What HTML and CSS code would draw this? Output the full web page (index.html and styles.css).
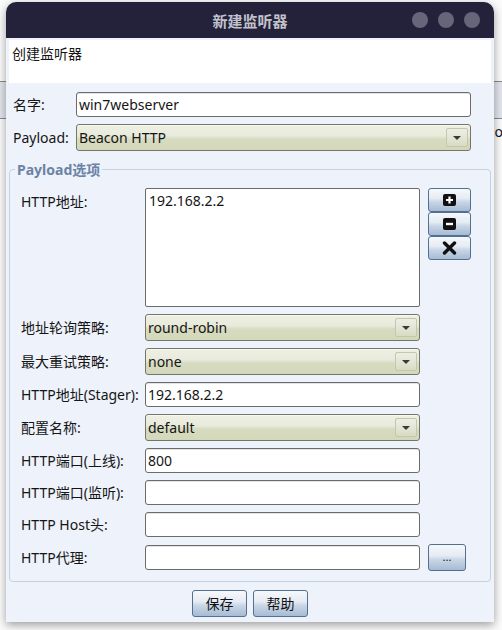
FILE: index.html
```html
<!DOCTYPE html>
<html>
<head>
<meta charset="utf-8">
<link rel="stylesheet" href="styles.css">
</head>
<body>
<div class="backdrop">
  <div class="band"></div>
  <div class="peek">o</div>
</div>
<div class="window">
  <div class="titlebar">
    <span></span>
    <span class="title">新建监听器</span>
    <div class="dots"><i></i><i></i><i></i></div>
  </div>
  <div class="body">
    <div class="header">创建监听器</div>
    <div class="top-form">
      <label>名字:</label>
      <div class="input">win7webserver</div>
      <label>Payload:</label>
      <div class="combo"><span>Beacon HTTP</span><b class="arrow"><i></i></b></div>
    </div>
    <fieldset class="group">
      <legend>Payload选项</legend>
      <div class="grid">
        <label class="top">HTTP地址:</label>
        <div class="textarea">192.168.2.2</div>
        <div class="stack">
          <button class="btn ibtn"><svg width="13" height="12" viewBox="0 0 13 12"><rect x="0" y="0" width="13" height="12" rx="2" fill="#111"/><path d="M6.5 2.5v7M3 6h7" stroke="#fff" stroke-width="2.2"/></svg></button>
          <button class="btn ibtn"><svg width="13" height="12" viewBox="0 0 13 12"><rect x="0" y="0" width="13" height="12" rx="2" fill="#111"/><path d="M3 6h7" stroke="#fff" stroke-width="2.4"/></svg></button>
          <button class="btn ibtn"><svg width="15" height="14" viewBox="0 0 15 14"><path d="M2.5 2l10 10M12.5 2l-10 10" stroke="#111" stroke-width="3.4" stroke-linecap="round"/></svg></button>
        </div>

        <label>地址轮询策略:</label>
        <div class="combo"><span>round-robin</span><b class="arrow"><i></i></b></div>
        <span></span>

        <label>最大重试策略:</label>
        <div class="combo"><span>none</span><b class="arrow"><i></i></b></div>
        <span></span>

        <label>HTTP地址(Stager):</label>
        <div class="input">192.168.2.2</div>
        <span></span>

        <label>配置名称:</label>
        <div class="combo"><span>default</span><b class="arrow"><i></i></b></div>
        <span></span>

        <label>HTTP端口(上线):</label>
        <div class="input">800</div>
        <span></span>

        <label>HTTP端口(监听):</label>
        <div class="input"></div>
        <span></span>

        <label>HTTP Host头:</label>
        <div class="input"></div>
        <span></span>

        <label>HTTP代理:</label>
        <div class="input"></div>
        <button class="btn dots-btn">...</button>
      </div>
    </fieldset>
    <div class="actions">
      <button class="btn action">保存</button>
      <button class="btn action">帮助</button>
    </div>
  </div>
</div>
</body>
</html>
```

FILE: styles.css
```css
* { box-sizing: border-box; }
html, body { margin: 0; padding: 0; }
body {
  width: 502px;
  height: 630px;
  overflow: hidden;
  background: #fbfbfc;
  font-family: "Noto Sans", "Noto Sans CJK SC", sans-serif;
  font-size: 14px;
  color: #151515;
  display: grid;
  align-items: start;
}
.backdrop, .window { grid-area: 1 / 1; }

.backdrop { padding-top: 81px; }
.backdrop .band {
  height: 38px;
  background: #e2e6ec;
  border-top: 1px solid #8a8a8a;
  border-bottom: 1px solid #7d8ea5;
}
.backdrop .peek {
  text-align: right;
  margin-right: -1px;
  line-height: 20px;
  padding-top: 3px;
}

.window {
  margin: 2px 0 0 6px;
  width: 488px;
  height: 620px;
  z-index: 1;
  box-shadow: 0 3px 10px rgba(0, 0, 0, 0.38);
  border-radius: 10px 10px 0 0;
}

.titlebar {
  height: 36px;
  background: #23223a;
  border-radius: 10px 10px 0 0;
  display: grid;
  grid-template-columns: 1fr auto 1fr;
  align-items: center;
  padding-right: 14px;
}
.title {
  color: #c3c2cc;
  font-size: 15px;
  font-weight: bold;
  padding-left: 14px;
}
.dots { display: flex; justify-content: flex-end; gap: 10px; }
.dots i {
  width: 16px; height: 16px; border-radius: 50%;
  background: #67657a; display: block;
}

.body {
  background: #eef2fa;
  padding: 2px 3px 0;
  height: 584px;
}
.header {
  background: #fff;
  height: 43px;
  padding: 4px 3px;
  line-height: 20px;
}

label { line-height: 20px; white-space: nowrap; }

.top-form {
  display: grid;
  grid-template-columns: 63px 395px;
  row-gap: 7px;
  align-items: center;
  padding: 9px 0 0 4px;
}

.input {
  height: 25px;
  background: #fff;
  border: 1px solid #6b6b6b;
  border-radius: 3px;
  padding: 0 2px;
  line-height: 23px;
  box-shadow: inset 0 1px 0 #e4e4e4;
}
.textarea {
  height: 119px;
  background: #fff;
  border: 1px solid #6b6b6b;
  border-radius: 2px;
  padding: 2px 3px;
  line-height: 20px;
}

.combo {
  height: 27px;
  border: 1px solid #747667;
  border-radius: 3px;
  background: linear-gradient(#eef0e4 0%, #e8eadb 44%, #d7dbbf 56%, #d4d8bb 100%);
  display: flex;
  align-items: stretch;
  box-shadow: inset 0 1px 0 #f8f9f2;
}
.combo span { flex: 1; padding-left: 2px; line-height: 25px; }
.combo .arrow {
  width: 22px;
  margin: 3px 2px 3px 0;
  border: 1px solid #c3c7ae;
  border-radius: 2px;
  background: linear-gradient(#edefe4, #e3e6d5 50%, #d8dcc3);
  display: flex;
  align-items: center;
  justify-content: center;
}
.combo .arrow i {
  width: 0; height: 0;
  border-left: 4px solid transparent;
  border-right: 4px solid transparent;
  border-top: 4px solid #3a3a3a;
}

.group {
  margin: 9px 0 0;
  padding: 9px 10px 10px 11px;
  border: 1px solid #c3d1e2;
  border-radius: 4px;
  min-width: 0;
}
.group legend {
  margin-left: -6px;
  padding: 0 2px;
  font-weight: bold;
  color: #6b83a6;
  line-height: 19px;
}
.group .grid {
  display: grid;
  grid-template-columns: 124px 275px auto;
  row-gap: 7px;
  align-items: center;
}
.group .grid label.top { align-self: start; padding-top: 4px; }

.btn {
  font-family: inherit;
  font-size: 14px;
  color: #111;
  border: 1px solid #54708f;
  border-radius: 3px;
  background: linear-gradient(#f6f8fb 0%, #e6ecf4 42%, #c9d6e6 58%, #a7bbd4 100%);
  padding: 0;
  display: flex;
  align-items: center;
  justify-content: center;
}
.stack {
  margin-left: 8px;
  align-self: start;
  display: flex;
  flex-direction: column;
}
.ibtn { width: 43px; height: 24px; }
.dots-btn {
  margin-left: 8px;
  width: 38px;
  height: 27px;
  font-size: 11px;
  line-height: 1;
  padding-bottom: 2px;
}

.actions {
  display: flex;
  justify-content: center;
  gap: 6px;
  margin-top: 8px;
}
.action { width: 55px; height: 27px; line-height: 20px; }
```
